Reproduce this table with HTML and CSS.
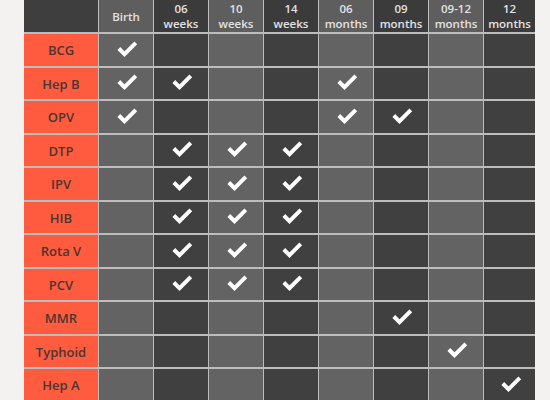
FILE: index.html
```html
<!DOCTYPE html>
<html>
<head>
<meta charset="utf-8">
<link rel="stylesheet" href="styles.css">
</head>
<body>
<div class="grid" id="grid">
  <div class="hd corner"></div>
  <div class="hd l">Birth</div>
  <div class="hd d">06<br>weeks</div>
  <div class="hd l">10<br>weeks</div>
  <div class="hd d">14<br>weeks</div>
  <div class="hd l">06<br>months</div>
  <div class="hd d">09<br>months</div>
  <div class="hd l">09-12<br>months</div>
  <div class="hd d">12<br>months</div>
</div>
<script src="app.js"></script>
</body>
</html>
```
FILE: app.js
```js
var rows = [
  ["BCG",     [1,0,0,0,0,0,0,0]],
  ["Hep B",   [1,1,0,0,1,0,0,0]],
  ["OPV",     [1,0,0,0,1,1,0,0]],
  ["DTP",     [0,1,1,1,0,0,0,0]],
  ["IPV",     [0,1,1,1,0,0,0,0]],
  ["HIB",     [0,1,1,1,0,0,0,0]],
  ["Rota V",  [0,1,1,1,0,0,0,0]],
  ["PCV",     [0,1,1,1,0,0,0,0]],
  ["MMR",     [0,0,0,0,0,1,0,0]],
  ["Typhoid", [0,0,0,0,0,0,1,0]],
  ["Hep A",   [0,0,0,0,0,0,0,1]]
];
var check = '<svg class="ck" viewBox="0 0 22 17" width="22" height="17"><path d="M2.8 8.5 L8.5 14.2 L19.8 2.8" fill="none" stroke="#fff" stroke-width="3.9" stroke-linejoin="miter" stroke-linecap="butt"/></svg>';
var g = document.getElementById("grid");
var html = "";
rows.forEach(function (r) {
  html += '<div class="vac">' + r[0] + '</div>';
  r[1].forEach(function (v, i) {
    html += '<div class="cell ' + (i % 2 === 0 ? "l" : "d") + '">' + (v ? check : "") + '</div>';
  });
});
g.insertAdjacentHTML("beforeend", html);
```
FILE: styles.css
```css
html, body {
  margin: 0;
  padding: 0;
  background: #f3f2f1;
  overflow: hidden;
}
.grid {
  margin-left: 24px;
  width: 511px;
  display: grid;
  grid-template-columns: 74px repeat(7, 54px) 51px;
  grid-template-rows: 32px;
  grid-auto-rows: 31.5px;
  column-gap: 1px;
  row-gap: 2px;
  background: #bdbdbd;
  font-family: "Open Sans", "Lato", sans-serif;
}
.hd {
  display: flex;
  align-items: center;
  justify-content: center;
  text-align: center;
  color: #e2e2e2;
  font-size: 11.5px;
  font-weight: 600;
  line-height: 15px;
}
.corner { background: #3e3e3e; }
.l { background: #636363; }
.d { background: #404040; }
.hd.l { background: #5e5e5e; }
.hd.d { background: #3b3b3b; }
.vac {
  background: #ff5b3e;
  color: #4a3632;
  font-size: 13px;
  font-weight: 600;
  display: flex;
  align-items: center;
  justify-content: center;
  padding-top: 1px;
}
.cell {
  display: flex;
  align-items: center;
  justify-content: center;
}
.ck {
  display: block;
  margin-left: 2px;
  margin-bottom: 3px;
}
```
